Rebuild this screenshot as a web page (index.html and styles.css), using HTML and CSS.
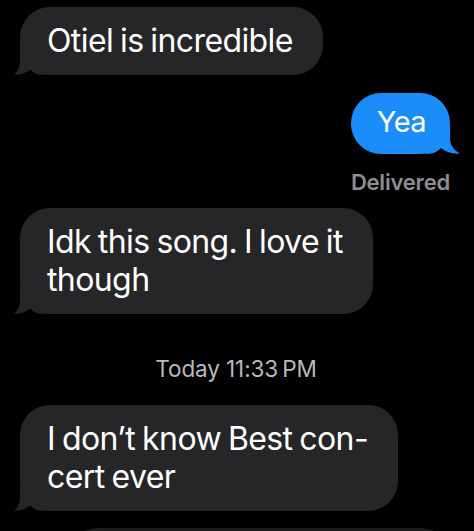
FILE: index.html
```html
<!DOCTYPE html>
<html lang="en">
<head>
<meta charset="utf-8">
<title>Messages</title>
<link rel="stylesheet" href="styles.css">
</head>
<body>
<main class="thread">
  <div class="bubble in b1">Otiel is incredible<svg class="tail tail-in" viewBox="0 0 30 26" width="30" height="26"><path d="M6 0 L6 12 C6 18.5 3.5 23 0 25.6 C5.5 26.2 11 24.5 16.5 20.5 C19 23.5 23 26 30 26 L30 0 Z"/></svg></div>
  <div class="bubble out b2">Yea<svg class="tail tail-out" viewBox="0 0 34 28" width="34" height="28"><path d="M24 0 L24 12 C24 19 28 24.5 34 27.6 C27 28.2 20 26 15 22 C12 25 8 28 0 28 L0 0 Z"/></svg></div>
  <div class="status">Delivered</div>
  <div class="bubble in b3">Idk this song. I love it<br>though<svg class="tail tail-in" viewBox="0 0 30 26" width="30" height="26"><path d="M6 0 L6 12 C6 18.5 3.5 23 0 25.6 C5.5 26.2 11 24.5 16.5 20.5 C19 23.5 23 26 30 26 L30 0 Z"/></svg></div>
  <div class="stamp">Today 11:33&#8201;PM</div>
  <div class="bubble in b4">I don’t know Best con-<br>cert ever<svg class="tail tail-in" viewBox="0 0 30 26" width="30" height="26"><path d="M6 0 L6 12 C6 18.5 3.5 23 0 25.6 C5.5 26.2 11 24.5 16.5 20.5 C19 23.5 23 26 30 26 L30 0 Z"/></svg></div>
  <div class="bubble peek">&nbsp;</div>
</main>
</body>
</html>
```

FILE: styles.css
```css
html, body {
  margin: 0;
  padding: 0;
  background: #000;
  height: 531px;
  overflow: hidden;
}

.thread {
  display: flex;
  flex-direction: column;
  padding: 7px 24px 0 20px;
  font-family: Inter, "Liberation Sans", Arial, sans-serif;
  color: #fff;
}

.bubble {
  position: relative;
  border-radius: 30px;
  font-size: 32px;
  line-height: 38px;
  letter-spacing: -0.6px;
  word-spacing: -1.5px;
  padding: 15px 30px 15px 27px;
  white-space: nowrap;
}

.bubble.in {
  align-self: flex-start;
  background: #262629;
}

.bubble.in .tail { fill: #262629; }

.bubble.out {
  align-self: flex-end;
  background: #1b8dfb;
}

.bubble.out .tail { fill: #1b8dfb; }

.tail {
  position: absolute;
  bottom: 0;
  display: block;
}

.tail-in { left: -6px; }
.tail-out { right: -10px; }

.b2 {
  margin-top: 18px;
  font-size: 29px;
  line-height: 33px;
  padding: 12px 24px 16px 26px;
}

.status {
  align-self: flex-end;
  margin-top: 15px;
  font-size: 22px;
  line-height: 26px;
  font-weight: 600;
  letter-spacing: -0.2px;
  color: #8d8d92;
}

.b3 { margin-top: 13px; }

.stamp {
  align-self: center;
  margin-top: 42px;
  margin-left: 2px;
  font-size: 22.5px;
  line-height: 26px;
  letter-spacing: -0.1px;
  color: #b9b9be;
}

.b4 { margin-top: 23px; }

.peek {
  align-self: stretch;
  margin-top: 17px;
  margin-left: 44px;
  margin-right: -4px;
  height: 60px;
  background: #1c1c1e;
  border-radius: 34px;
}
```
